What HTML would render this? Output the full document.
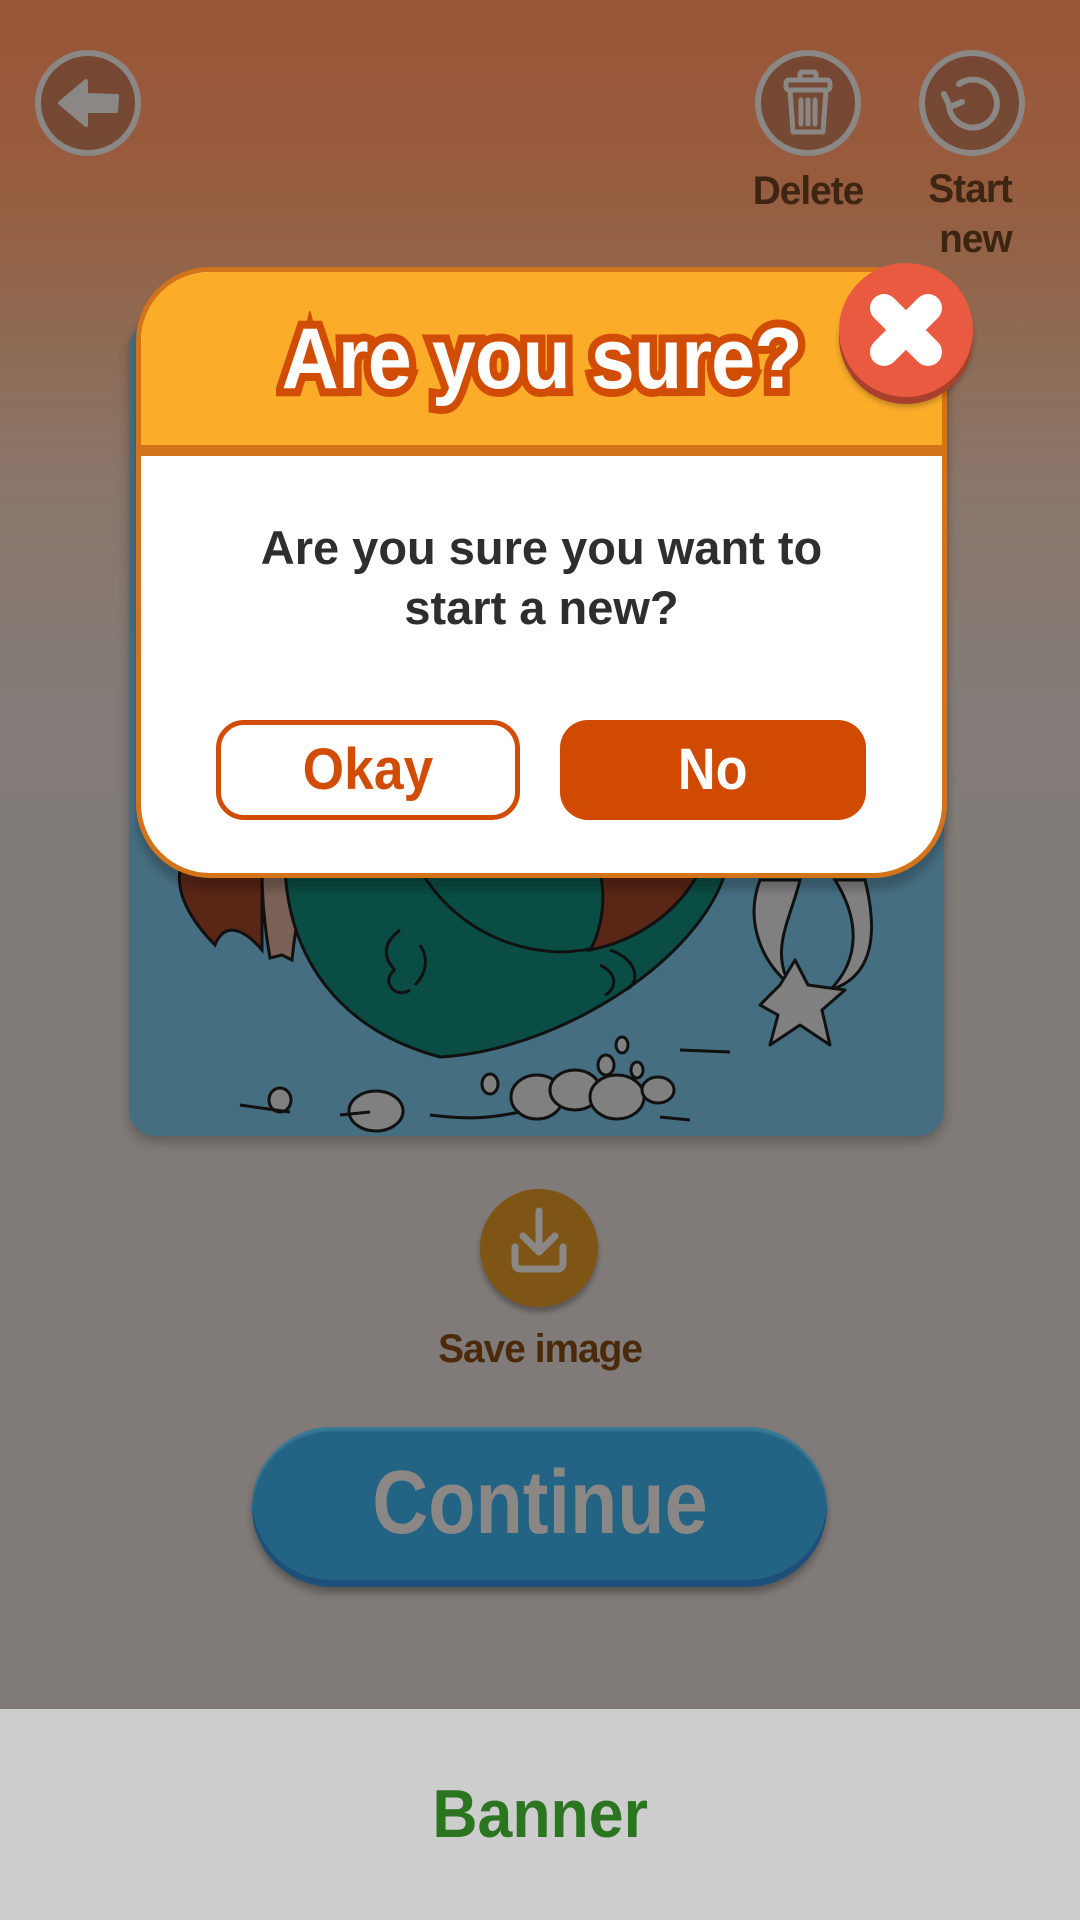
<!DOCTYPE html>
<html><head><meta charset="utf-8"><style>
*{margin:0;padding:0;box-sizing:border-box}
html,body{width:1080px;height:1920px;overflow:hidden}
body{position:relative;font-family:"Liberation Sans",sans-serif;font-weight:bold;
background:linear-gradient(180deg,#9a5538 0px,#975c3e 180px,#8f6a52 330px,#8a766a 480px,#827b77 700px,#807b78 1000px,#807b78 1709px);}
.abs{position:absolute}
.circ{position:absolute;width:106px;height:106px;border-radius:50%;border:6px solid #8a8784;background:rgba(90,60,45,0.55)}
.lbl{position:absolute;color:#3e2512;font-size:40px;text-align:center;line-height:50px;letter-spacing:-1px}
.sx{display:inline-block;transform:scaleX(0.97)}
</style></head><body>

<div class="circ" style="left:35px;top:50px"></div>
<svg class="abs" style="left:0;top:0" width="200" height="200"><path d="M60,103 L86,81 L86,95 L117,96 L116,111 L86,111 L86,125 Z" fill="#8a8784" stroke="#8a8784" stroke-width="4" stroke-linejoin="round"/></svg>

<div class="circ" style="left:755px;top:50px"></div>
<svg class="abs" style="left:755px;top:50px" width="106" height="106" viewBox="0 0 106 106"><g fill="none" stroke="#8a8784" stroke-width="5" stroke-linejoin="round" stroke-linecap="round"><rect x="31" y="30" width="44" height="10" rx="3"/><rect x="45" y="22" width="16" height="8" rx="2"/><path d="M35,40 L38,82 L68,82 L71,40"/><path d="M46,50 V74 M53,50 V74 M60,50 V74"/></g></svg>
<div class="lbl" style="left:730px;top:166px;width:156px"><span class="sx">Delete</span></div>

<div class="circ" style="left:919px;top:50px"></div>
<svg class="abs" style="left:919px;top:50px" width="106" height="106" viewBox="0 0 106 106"><g fill="none" stroke="#8a8784" stroke-width="6" stroke-linecap="round" stroke-linejoin="round"><path d="M30,56 A24,24 0 1 0 40,34"/><path d="M25,44 L31,57 L43,52"/></g></svg>
<div class="lbl" style="left:900px;top:164px;width:140px"><span class="sx">Start</span></div>
<div class="lbl" style="left:905px;top:214px;width:140px"><span class="sx">new</span></div>

<div class="abs" style="left:129px;top:322px;width:815px;height:814px;border-radius:26px;background:#456e80;box-shadow:0 6px 12px rgba(0,0,0,0.25);overflow:hidden"></div>
<svg class="abs" style="left:0;top:0" width="1080" height="1200" viewBox="0 0 1080 1200">
<g stroke="#111" stroke-width="3">
<path d="M180,870 C175,900 200,930 215,945 C225,920 245,930 262,950 L262,870 Z" fill="#5a2616"/>
<path d="M262,870 L310,870 C300,900 295,930 292,960 L282,955 L270,958 C265,930 262,900 262,870 Z" fill="#7a6055"/>
<path d="M285,870 C290,960 340,1030 440,1057 C560,1050 700,960 726,870 Z" fill="#0a4d44"/>
<path d="M420,870 C450,920 500,950 560,952 C620,950 660,930 690,870" fill="none"/>
<path d="M600,870 C610,920 590,950 590,950 C640,940 680,910 700,870 Z" fill="#5a2616"/>
<path d="M400,930 C380,945 385,960 395,970 M395,970 C380,980 395,1000 410,990 M420,945 C430,960 425,975 415,985" fill="none"/>
<path d="M610,950 C640,960 640,985 625,990 M600,965 C620,975 615,990 605,995" fill="none"/>
<path d="M760,880 C745,920 760,960 790,985 C770,950 790,920 800,880 Z M835,880 C860,920 860,960 830,990 C880,975 875,920 865,880 Z" fill="#808080"/>
<path d="M760,1005 L780,985 L795,960 L808,985 L845,990 L822,1010 L830,1045 L800,1025 L770,1045 L778,1015 Z" fill="#808080" stroke-linejoin="round"/>
<g fill="#808080">
<ellipse cx="280" cy="1100" rx="11" ry="12"/><ellipse cx="376" cy="1111" rx="27" ry="20"/>
<ellipse cx="537" cy="1097" rx="26" ry="22"/><ellipse cx="575" cy="1090" rx="25" ry="20"/><ellipse cx="617" cy="1097" rx="27" ry="22"/><ellipse cx="658" cy="1090" rx="16" ry="13"/>
<ellipse cx="490" cy="1084" rx="8" ry="10"/><ellipse cx="606" cy="1065" rx="8" ry="10"/><ellipse cx="637" cy="1070" rx="6" ry="8"/><ellipse cx="622" cy="1045" rx="6" ry="8"/>
</g>
<path d="M240,1105 L290,1112 M340,1115 L370,1112 M430,1115 C470,1120 490,1118 520,1112 M660,1117 L690,1120 M680,1050 L730,1052" fill="none"/>
</g>
</svg>

<div class="abs" style="left:136px;top:267px;width:811px;height:611px;border:5px solid #d4741a;border-radius:74px;background:#fff;overflow:hidden;box-shadow:0 12px 8px rgba(0,0,0,0.2)">
  <div style="height:184px;background:#fbad2a;border-bottom:11px solid #d4741a"></div>
</div>
<div class="abs" style="left:136px;top:304px;width:811px;text-align:center;font-size:86px;line-height:110px;color:#fff;-webkit-text-stroke:16px #d14d05;paint-order:stroke fill;letter-spacing:-1px"><span class="sx" style="transform:scaleX(0.92)">Are you sure?</span></div>
<div class="abs" style="left:116px;top:518px;width:851px;text-align:center;font-size:47px;line-height:60px;color:#2e2e2e;letter-spacing:0px">Are you sure you want to<br>start a new?</div>
<div class="abs" style="left:216px;top:720px;width:304px;height:100px;border:5px solid #d14d05;border-radius:28px;background:#fff;color:#d14d05;font-size:58px;line-height:90px;text-align:center"><span class="sx" style="transform:scaleX(0.92)">Okay</span></div>
<div class="abs" style="left:560px;top:720px;width:306px;height:100px;border-radius:28px;background:#d14a02;color:#fff;font-size:58px;line-height:100px;text-align:center"><span class="sx" style="transform:scaleX(0.9)">No</span></div>

<div class="abs" style="left:839px;top:263px;width:134px;height:134px;border-radius:50%;background:#e95a40;box-shadow:0 7px 0 #a8402b,0 10px 6px rgba(0,0,0,0.25)"></div>
<svg class="abs" style="left:839px;top:263px" width="134" height="134"><path d="M45,45 L89,89 M89,45 L45,89" stroke="#fff" stroke-width="28" stroke-linecap="round"/></svg>

<div class="abs" style="left:480px;top:1189px;width:118px;height:118px;border-radius:50%;background:#7f5516;box-shadow:0 5px 6px rgba(0,0,0,0.3)"></div>
<svg class="abs" style="left:480px;top:1189px" width="118" height="118"><g fill="none" stroke="#8a8784" stroke-width="7" stroke-linecap="round" stroke-linejoin="round"><path d="M59,22 V62 M43,47 L59,63 L75,47"/><path d="M35,58 V74 Q35,80 41,80 H77 Q83,80 83,74 V58"/></g></svg>
<div class="abs" style="left:290px;top:1322px;width:500px;text-align:center;font-size:40px;line-height:54px;color:#4a2a0a;letter-spacing:-1px"><span class="sx">Save image</span></div>

<div class="abs" style="left:252px;top:1427px;width:575px;height:160px;border-radius:80px;background:#236383;box-shadow:inset 0 -7px 0 #1d4f7a,inset 0 4px 2px #3a7a97,0 6px 8px rgba(0,0,0,0.3);color:#8a8785;font-size:90px;line-height:152px;text-align:center"><span class="sx" style="transform:scaleX(0.86)">Continue</span></div>

<div class="abs" style="left:0;top:1709px;width:1080px;height:211px;background:#cdcdcd;color:#2b7521;font-size:68px;line-height:211px;text-align:center"><span class="sx" style="transform:scaleX(0.92)">Banner</span></div>
</body></html>
